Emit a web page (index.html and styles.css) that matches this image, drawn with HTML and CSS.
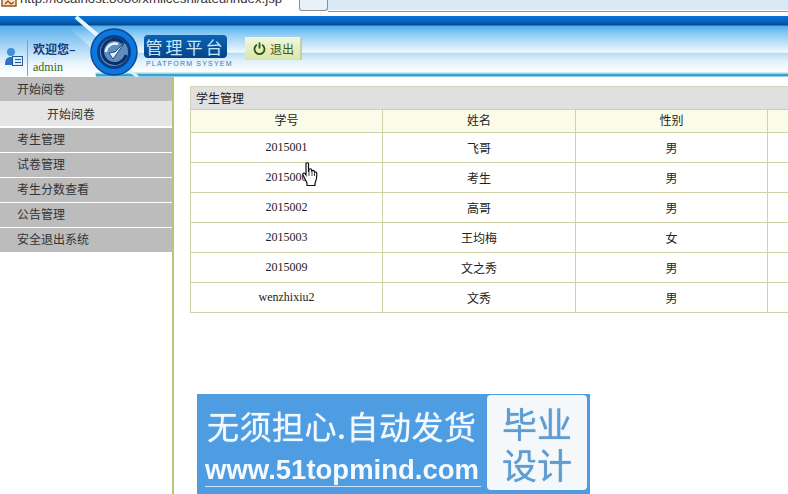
FILE: index.html
```html
<!DOCTYPE html>
<html lang="en">
<head>
    <meta charset="UTF-8">
    <meta name="viewport" content="width=device-width, initial-scale=1.0">
    <title>管理平台</title>
    <link rel="stylesheet" href="styles.css">
</head>
<body>

    <div class="browser-strip">
        <svg class="favicon" width="16" height="8" viewBox="0 0 16 8">
            <path d="M1 0v6h14V0" fill="#f4e3c0" stroke="#8a5a20" stroke-width="1.4"/>
            <path d="M4 4l3-3 3 3 3-2" fill="none" stroke="#b03020" stroke-width="1.2"/>
        </svg>
        <div class="url">http://localhost:8080/xmliceshi/ateu/index.jsp</div>
        <div class="strip-tab"></div>
        <div class="strip-rest"></div>
    </div>

    <div class="header">
        <svg class="header-deco" width="140" height="61" viewBox="0 0 140 61">
            <path d="M0 11H68L92 33L96 61H0Z" fill="url(#panelFill)"/>
            <path d="M76 1L103 24" stroke="#e8f6ff" stroke-width="4" fill="none"/>
            <path d="M126 52L138 61" stroke="#d8f0fc" stroke-width="3" fill="none"/>
            <defs>
                <linearGradient id="panelFill" x1="0" y1="0" x2="0" y2="1">
                    <stop offset="0" stop-color="#5db0ec"/>
                    <stop offset="0.75" stop-color="#eef7fe"/>
                    <stop offset="1" stop-color="#ffffff"/>
                </linearGradient>
            </defs>
        </svg>

        <svg class="user-icon" width="18" height="20" viewBox="0 0 18 20">
            <circle cx="6" cy="5" r="4" fill="#3f8fdc"/>
            <path d="M0 18c0-6 2-8 6-8s5 2 5 4v4z" fill="#2f74c4"/>
            <rect x="7.5" y="9.5" width="10" height="9" fill="#dcecf8" stroke="#1d5c9e"/>
            <path d="M10 12.500h6M10 15.500h6" stroke="#1d5c9e"/>
        </svg>
        <div class="welcome">
            <div class="welcome-title">欢迎您–</div>
            <div class="welcome-name">admin</div>
        </div>

        <svg class="logo" width="48" height="48" viewBox="0 0 48 48">
            <circle cx="24" cy="24" r="23" fill="#0b78e0"/>
            <circle cx="24" cy="24" r="23" fill="none" stroke="#0a4a94" stroke-width="1.500"/>
            <circle cx="24" cy="24" r="17" fill="#0a3f86"/>
            <circle cx="24" cy="24" r="14" fill="#5f8dbd"/>
            <path d="M33 15A12 12 0 1 0 36 27" fill="none" stroke="#0a2f6c" stroke-width="3"/>
            <path d="M16 24a9 9 0 0 1 12-8" fill="none" stroke="#e6f2fb" stroke-width="2.500"/>
            <path d="M19 25l4 6 12-17-10 10z" fill="#eaf4fb" stroke="#0a2f6c" stroke-width="0.800"/>
        </svg>

        <div class="brand">
            <div class="brand-name">管理平台</div>
            <div class="brand-sub">PLATFORM SYSYEM</div>
        </div>

        <div class="logout-btn">
            <svg width="13" height="13" viewBox="0 0 13 13">
                <path d="M4 2.800a5 5 0 1 0 5 0" fill="none" stroke="#2f5a10" stroke-width="1.800"/>
                <path d="M6.500 0.500v6" stroke="#2f5a10" stroke-width="1.800"/>
            </svg>
            <span>退出</span>
        </div>
    </div>

    <div class="layout">
        <div class="sidebar">
            <div class="menu-item">开始阅卷</div>
            <div class="menu-sub">开始阅卷</div>
            <div class="menu-item">考生管理</div>
            <div class="menu-item">试卷管理</div>
            <div class="menu-item">考生分数查看</div>
            <div class="menu-item">公告管理</div>
            <div class="menu-item">安全退出系统</div>
        </div>

        <div class="content">
            <div class="panel">
                <div class="panel-title">学生管理</div>
                <table class="student-table">
                    <thead>
                        <tr><th>学号</th><th>姓名</th><th>性别</th><th></th></tr>
                    </thead>
                    <tbody>
                        <tr><td>2015001</td><td>飞哥</td><td>男</td><td></td></tr>
                        <tr><td>2015000</td><td>考生</td><td>男</td><td></td></tr>
                        <tr><td>2015002</td><td>高哥</td><td>男</td><td></td></tr>
                        <tr><td>2015003</td><td>王均梅</td><td>女</td><td></td></tr>
                        <tr><td>2015009</td><td>文之秀</td><td>男</td><td></td></tr>
                        <tr><td>wenzhixiu2</td><td>文秀</td><td>男</td><td></td></tr>
                    </tbody>
                </table>
            </div>

            <div class="banner">
                <div class="banner-left">
                    <div class="banner-slogan">无须担心.自动发货</div>
                    <div class="banner-url">www.51topmind.com</div>
                </div>
                <div class="banner-right">
                    <div class="banner-word">毕业</div>
                    <div class="banner-word">设计</div>
                </div>
            </div>
        </div>
    </div>

    <svg class="hand-cursor" width="16" height="25" viewBox="0 0 16 25">
        <path d="M4 1.500c1-1 2-1 2.500 0V10l.5-2.500c1-1 2-1 2.500 0l.3 1.500c1-1 2-.8 2.400.2l.3 1c1-.6 2-.2 2.200.8.300 3-.2 7-1.700 10.500v2H5v-2.500L1 13c-.6-1.500.8-2.500 2-1.500l1 1.500z" fill="#fff" stroke="#111" stroke-width="1.200"/>
        <path d="M7 9v5M10 9.500V14M12.500 10.500V14" stroke="#111" stroke-width="0.800" fill="none"/>
    </svg>

</body>
</html>
```

FILE: styles.css
```css
html, body {
    height: 100%;
}
body {
    font-family: "Noto Sans CJK SC", sans-serif;
    font-size: 12px;
    color: #222;
    background: #fff;
    margin: 0;
    overflow: hidden;
    display: flex;
    flex-direction: column;
    position: relative;
}
.browser-strip {
    height: 16px;
    flex: none;
    display: flex;
    overflow: hidden;
    background: #fff;
}
.favicon {
    flex: none;
    margin-left: 1px;
}
.url {
    width: 279px;
    flex: none;
    margin: -11px 0 0 3px;
    font-family: "Liberation Sans", sans-serif;
    font-size: 13.250px;
    line-height: 20px;
    color: #333;
    white-space: nowrap;
}
.strip-tab {
    width: 29px;
    height: 11px;
    flex: none;
    box-sizing: border-box;
    background: #e8f0f8;
    border: 1px solid #8a8f96;
    border-top: none;
    border-radius: 0 0 3px 3px;
}
.strip-rest {
    flex: 1;
    height: 12px;
    box-sizing: border-box;
    background: #d9eaf6;
    border-bottom: 1px solid #8f9497;
    box-shadow: inset 0 -1px 0 #fff;
}
.header {
    height: 61px;
    flex: none;
    position: relative;
    display: flex;
    align-items: flex-start;
    background: linear-gradient(to bottom,
        #0a74d8 0, #0661b8 6px, #04468c 9px,
        #52aeee 10px, #8ccbf4 18px, #eaf5fd 35px, #ffffff 36px,
        #b8dcf5 37px, #e2f1fb 45px, #ffffff 56px,
        #8ce4f0 57px, #7fd8ea 58px, #0d6ba8 59px, #7cc4e8 60px, #9ad4ee 61px);
}
.header-deco {
    position: absolute;
    left: 0;
    top: 0;
}
.user-icon {
    position: relative;
    margin: 31px 0 0 5px;
    flex: none;
}
.welcome {
    position: relative;
    width: 56px;
    flex: none;
    margin: 24px 0 0 4px;
    padding-left: 5px;
    border-left: 1px solid #6aa6d8;
    line-height: 18px;
    height: 36px;
}
.welcome-title {
    font-weight: bold;
    color: #123c7a;
    white-space: nowrap;
}
.welcome-name {
    font-family: "Liberation Serif", serif;
    color: #2f6a10;
    white-space: nowrap;
}
.logo {
    position: relative;
    flex: none;
    margin: 12px 0 0 1px;
}
.brand {
    flex: none;
    margin: 19px 0 0 6px;
    width: 83px;
}
.brand-name {
    height: 23px;
    background: linear-gradient(to bottom, #0a62b4, #064488);
    border-radius: 4px;
    color: #c8e6f8;
    font-size: 17px;
    line-height: 23px;
    letter-spacing: 3px;
    text-align: center;
}
.brand-sub {
    margin-top: 2px;
    padding-left: 2px;
    font-family: "Liberation Sans", sans-serif;
    font-size: 7px;
    line-height: 8px;
    letter-spacing: 1.200px;
    color: #2f7cc4;
    white-space: nowrap;
}
.logout-btn {
    flex: none;
    width: 57px;
    height: 23px;
    margin: 21px 0 0 18px;
    box-sizing: border-box;
    padding-left: 8px;
    display: flex;
    align-items: center;
    gap: 4px;
    background: linear-gradient(to bottom, #f4f7dc, #d9e6ac);
    border-right: 2px solid #c4d294;
    color: #3c5a18;
    font-size: 12px;
}
.layout {
    flex: 1;
    display: flex;
    min-height: 0;
}
.sidebar {
    width: 172px;
    flex: none;
    border-right: 2px solid #b4c67a;
}
.menu-item {
    height: 24px;
    line-height: 22px;
    margin-bottom: 1px;
    padding-left: 17px;
    background: #bcbcbc;
    color: #333;
}
.menu-item:first-child {
    line-height: 24px;
    margin-bottom: 0;
}
.menu-sub {
    height: 25px;
    line-height: 25px;
    margin-bottom: 2px;
    padding-left: 47px;
    background: #e5e5e5;
    color: #333;
}
.content {
    flex: 1;
    min-width: 0;
    padding: 9px 0 0 16px;
}
.panel {
    width: 640px;
}
.panel-title {
    height: 23px;
    box-sizing: border-box;
    line-height: 22px;
    padding-left: 5px;
    background: #e0e0e0;
    border-top: 1px solid #d6d6bc;
    border-left: 1px solid #d6d6bc;
    color: #222;
}
.student-table {
    border-collapse: collapse;
    table-layout: fixed;
    width: 640px;
    text-align: center;
}
.student-table th {
    height: 23px;
    padding: 0 0 3px;
    box-sizing: border-box;
    background: #fafbe9;
    font-weight: normal;
    border: 1px solid #cfd2a6;
}
.student-table td {
    height: 30px;
    padding: 0;
    box-sizing: border-box;
    font-family: "Liberation Serif", "Noto Sans CJK SC", serif;
    border: 1px solid #cfd2a6;
}
.student-table th:nth-child(1) {
    width: 192px;
}
.student-table th:nth-child(2) {
    width: 193px;
}
.student-table th:nth-child(3) {
    width: 192px;
}
.banner {
    width: 393px;
    height: 100px;
    margin: 81px 0 0 7px;
    display: flex;
    background: #4e9de2;
    filter: blur(0.4px);
}
.banner-left {
    width: 290px;
    flex: none;
    box-sizing: border-box;
    padding: 11px 0 0 8px;
    color: #fff;
}
.banner-slogan {
    padding-left: 2px;
    font-size: 32px;
    line-height: 40px;
    white-space: nowrap;
    letter-spacing: 0.500px;
    color: #f2f8fd;
    text-shadow: 0 0 1px #f2f8fd;
}
.banner-url {
    margin-top: 8px;
    font-family: "Liberation Sans", sans-serif;
    font-size: 27.500px;
    font-weight: bold;
    line-height: 33px;
    color: #f4f9fe;
    border-bottom: 1px solid #cfe4f6;
    width: 276px;
    white-space: nowrap;
}
.banner-right {
    width: 100px;
    height: 95px;
    margin-top: 1px;
    flex: none;
    box-sizing: border-box;
    padding-top: 7px;
    background: #f4f8fb;
    border-radius: 4px;
    color: #5f9ccf;
    font-size: 35px;
    text-align: center;
}
.banner-word {
    height: 41px;
    line-height: 41px;
    text-shadow: 0 0 1px #5f9ccf;
}
.hand-cursor {
    position: absolute;
    left: 302px;
    top: 162px;
}
```
